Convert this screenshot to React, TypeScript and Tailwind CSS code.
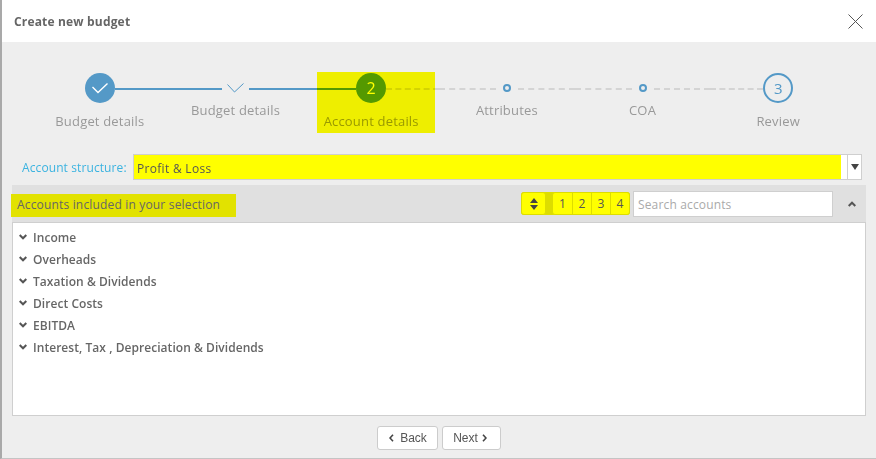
import React from "react";

const steps = [
  { label: "Budget details", low: true, kind: "done", left: "none", right: "solid" },
  { label: "Budget details", low: false, kind: "check", left: "solid", right: "solid" },
  { label: "Account details", low: true, kind: "current", left: "solid", right: "dash" },
  { label: "Attributes", low: false, kind: "dot", left: "dash", right: "dash" },
  { label: "COA", low: false, kind: "dot", left: "dash", right: "dash" },
  { label: "Review", low: true, kind: "last", left: "dash", right: "none" },
];

function Conn({ t }: { t: string }) {
  if (t === "none") return <div className="flex-1" />;
  if (t === "solid") return <div className="flex-1 h-[2px] mt-[2px] bg-[#5499c7]" />;
  return <div className="flex-1 mt-[2px] border-t-2 border-dashed border-[#d4d4d4]" />;
}

function Marker({ kind }: { kind: string }) {
  if (kind === "done")
    return (
      <div className="w-[30px] h-[30px] rounded-full bg-[#5499c7] flex items-center justify-center">
        <svg width="18" height="12" viewBox="0 0 18 12" fill="none" stroke="#fff" strokeWidth="1.4"><path d="M1.5 5 L7 10.5 L16.5 1.5" /></svg>
      </div>
    );
  if (kind === "check")
    return (
      <div className="mx-[5px] w-[17px] flex justify-center">
        <svg width="17" height="11" viewBox="0 0 17 11" fill="none" stroke="#5499c7" strokeWidth="1"><path d="M0.5 1.5 L7.5 9 L16.5 0.5" /></svg>
      </div>
    );
  if (kind === "current")
    return <div className="w-[30px] h-[30px] rounded-full bg-[#5499c7] flex items-center justify-center text-white text-[16px]">2</div>;
  if (kind === "dot")
    return <div className="mx-[7px] w-[8px] h-[8px] rounded-full border-2 border-[#5499c7]" />;
  return <div className="w-[30px] h-[30px] rounded-full border-2 border-[#5499c7] flex items-center justify-center text-[#5499c7] text-[15px]">3</div>;
}

const rows = ["Income", "Overheads", "Taxation & Dividends", "Direct Costs", "EBITDA", "Interest, Tax , Depreciation & Dividends"];

function Chevron() {
  return (
    <svg className="mt-[-3px]" width="8" height="6" viewBox="0 0 8 6" fill="none" stroke="#555" strokeWidth="2"><path d="M0.7 1 L4 4.3 L7.3 1" /></svg>
  );
}

export default function App() {
  return (
    <div className="relative w-[876px] h-[459px] overflow-hidden bg-[#eeeeee] text-[#666] border-l-2 border-b border-l-[#a9a9a9] border-b-[#c4c4c4]" style={{ fontFamily: '"Open Sans", sans-serif' }}>
      <div className="h-[42px] bg-white flex items-center justify-between pl-[12px] pr-[13px]">
        <div className="text-[12px] font-bold text-[#666] tracking-[0.17px] mt-[1px]">Create new budget</div>
        <svg width="15" height="15" viewBox="0 0 15 15" fill="none" stroke="#555" strokeWidth="1"><path d="M0.5 0.5 L14.5 14.5 M14.5 0.5 L0.5 14.5" /></svg>
      </div>

      <div className="relative flex px-[30px] pt-[31px] h-[112px]">
        {steps.map((s, i) => (
          <div key={i} className="flex-1 flex flex-col">
            <div className="h-[30px] flex items-center">
              <Conn t={s.left} />
              <Marker kind={s.kind} />
              <Conn t={s.right} />
            </div>
            <div className={`text-center text-[13px] leading-[18px] tracking-[0.18px] text-[#999] ${s.low ? "mt-[9px]" : "mt-[-2px]"}`}>{s.label}</div>
          </div>
        ))}
        <div className="absolute left-[315px] top-[30px] w-[118px] h-[61px] bg-[#ffff00] mix-blend-multiply" />
      </div>

      <div className="flex items-center h-[26px] pl-[20px] pr-[12px]">
        <div className="text-[12px] text-[#3bb3e0] w-[111px] tracking-[0.1px] mt-[1px] whitespace-nowrap">Account structure:</div>
        <div className="w-[729px] flex h-[26px] border border-[#cfcfcf] bg-white">
          <div className="flex-1 bg-[#ffff00] pl-[3px] text-[12px] leading-[27px] tracking-[0.3px] text-[#555] mr-[6px]">Profit &amp; Loss</div>
          <div className="w-[14px] border-l border-[#cfcfcf] flex items-center justify-center">
            <svg width="8" height="6" viewBox="0 0 8 6"><path d="M0 0 H8 L4 6 Z" fill="#444" /></svg>
          </div>
        </div>
      </div>

      <div className="mx-[10px] mt-[5px] h-[231px] flex flex-col">
        <div className="h-[37px] bg-[#e0e0e0] flex items-center relative">
          <div className="ml-[-1px] mt-[4px] bg-[#e2e200] h-[23px] w-[225px] pl-[6px] text-[12px] leading-[21px] tracking-[0.17px] text-[#666]">Accounts included in your selection</div>
          <div className="flex-1" />
          <div className="flex items-center">
            <div className="flex items-center h-[23px] bg-[#dddd00] rounded-[3px]">
              <div className="w-[25px] h-[23px] bg-[#ffff00] border border-[#dddd00] rounded-[3px] flex items-center justify-center">
                <svg width="8" height="12" viewBox="0 0 8 12"><path d="M4 0 L8 5 H0 Z M0 7 H8 L4 12 Z" fill="#444" /></svg>
              </div>
              <div className="ml-[6px] flex h-[23px] bg-[#ffff00] border border-[#dddd00] rounded-[3px] text-[12px] text-[#555]">
                {[1, 2, 3, 4].map((n) => (
                  <div key={n} className="w-[19px] flex items-center justify-center border-l border-[#dddd00] first:border-l-0">{n}</div>
                ))}
              </div>
            </div>
            <div className="ml-[3px] w-[200px] h-[26px] bg-white border border-[#cfcfcf] pl-[4px] text-[12px] leading-[26px] tracking-[0.15px] text-[#aaa]">Search accounts</div>
            <div className="w-[33px] pl-[4px] flex justify-center">
              <svg width="8" height="6" viewBox="0 0 8 6" fill="none" stroke="#555" strokeWidth="2"><path d="M0.7 5 L4 1.7 L7.3 5" /></svg>
            </div>
          </div>
        </div>
        <div className="flex-1 bg-white border border-[#cfcfcf] pt-[4px] pl-[6px]">
          {rows.map((r) => (
            <div key={r} className="h-[22px] flex items-center gap-[6px]">
              <Chevron />
              <span className="text-[12px] font-semibold text-[#666] tracking-[0.05px]">{r}</span>
            </div>
          ))}
        </div>
      </div>

      <div className="flex justify-center gap-[4px] mt-[10px] pr-[1px]" style={{ fontFamily: '"Liberation Sans", sans-serif' }}>
        <div className="w-[61px] h-[24px] bg-white border border-[#ccc] rounded-[3px] flex items-center justify-center gap-[6px] pl-[2px] text-[12px] text-[#555]">
          <svg width="5" height="8" viewBox="0 0 5 8" fill="none" stroke="#444" strokeWidth="1.6"><path d="M4 0.7 L1 4 L4 7.3" /></svg>
          Back
        </div>
        <div className="w-[59px] h-[24px] bg-white border border-[#ccc] rounded-[3px] flex items-center justify-center gap-[4px] pr-[2px] text-[12px] text-[#555]">
          Next
          <svg width="5" height="8" viewBox="0 0 5 8" fill="none" stroke="#444" strokeWidth="1.6"><path d="M1 0.7 L4 4 L1 7.3" /></svg>
        </div>
      </div>
    </div>
  );
}
